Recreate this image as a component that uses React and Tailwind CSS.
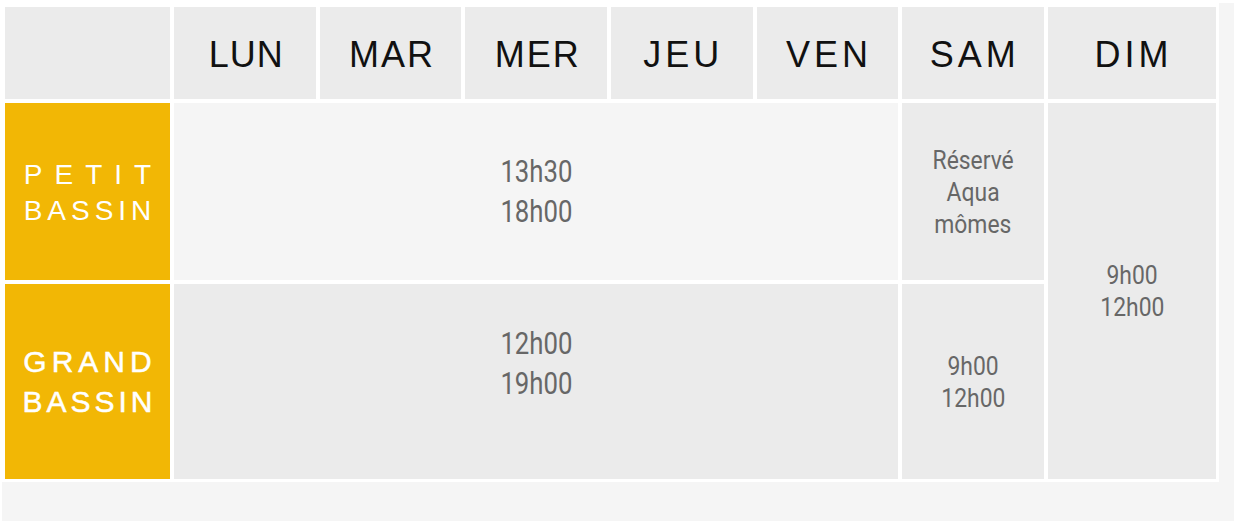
import React from 'react';

const days = [
  { label: 'LUN', track: 'tracking-[1px]' },
  { label: 'MAR', track: 'tracking-[2px]' },
  { label: 'MER', track: 'tracking-[2px]' },
  { label: 'JEU', track: 'tracking-[4px]' },
  { label: 'VEN', track: 'tracking-[4px]' },
  { label: 'SAM', track: 'tracking-[4px]' },
  { label: 'DIM', track: 'tracking-[4px]' },
];

// Condensed look for the hours, Roboto squeezed a bit
function Hours({ lines, size = 'big' }) {
  const cls =
    size === 'big'
      ? 'text-[31px] leading-[40px] scale-x-[0.83]'
      : 'text-[26px] leading-[32px] scale-x-[0.88]';
  return (
    <div className="flex flex-col items-center text-[#676767] font-['Roboto',sans-serif]">
      {lines.map((l) => (
        <span key={l} className={`inline-block ${cls}`}>
          {l}
        </span>
      ))}
    </div>
  );
}

export default function App() {
  return (
    <div className="w-[1240px] h-[525px] bg-white font-['Liberation_Sans',Arial,sans-serif]">
      <div className="ml-[2px] pt-[3px]">
        <div className="w-[1232px] h-[518px] bg-[#f5f5f5]">
          <div className="w-[1217px] bg-white px-[3px] pt-[4px] pb-[3px]">
            <div className="grid grid-cols-[165px_repeat(6,1fr)_168px] grid-rows-[92px_177px_195px] gap-[4px]">
              {/* header */}
              <div className="bg-[#ebebeb]" />
              {days.map((d) => (
                <div
                  key={d.label}
                  className={`bg-[#ebebeb] flex items-center justify-center text-[36px] text-[#111] pl-[3px] pt-[4px] ${d.track}`}
                >
                  {d.label}
                </div>
              ))}

              {/* petit bassin */}
              <div className="bg-[#f2b705] flex flex-col items-center justify-center text-white text-[28px] leading-[36px] pt-[2px]">
                <span className="tracking-[12px] pl-[12px]">PETIT</span>
                <span className="tracking-[5px] pl-[5px]">BASSIN</span>
              </div>
              <div className="col-span-5 bg-[#f5f5f5] flex items-center justify-center">
                <Hours lines={['13h30', '18h00']} />
              </div>
              <div className="bg-[#ebebeb] flex items-center justify-center">
                <Hours lines={['Réservé', 'Aqua', 'mômes']} size="small" />
              </div>
              <div className="row-span-2 bg-[#ebebeb] flex items-center justify-center">
                <Hours lines={['9h00', '12h00']} size="small" />
              </div>

              {/* grand bassin */}
              <div className="bg-[#f2b705] flex flex-col items-center justify-center text-white text-[30px] leading-[40px] [-webkit-text-stroke:0.5px_white]">
                <span className="tracking-[5px] pl-[5px]">GRAND</span>
                <span className="tracking-[4px] pl-[4px]">BASSIN</span>
              </div>
              <div className="col-span-5 bg-[#ebebeb] flex items-center justify-center pb-[36px]">
                <Hours lines={['12h00', '19h00']} />
              </div>
              <div className="bg-[#ebebeb] flex items-center justify-center">
                <Hours lines={['9h00', '12h00']} size="small" />
              </div>
            </div>
          </div>
        </div>
      </div>
    </div>
  );
}
